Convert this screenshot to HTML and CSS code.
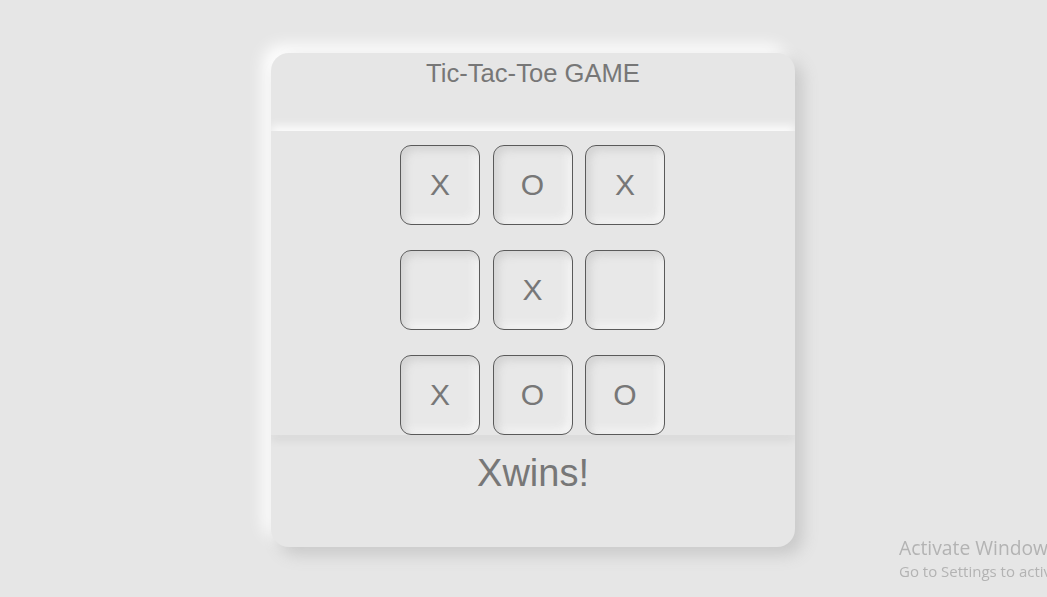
FILE: index.html
```html
<!DOCTYPE html>
<html>
<head>
<meta charset="utf-8">
<link rel="stylesheet" href="styles.css">
</head>
<body>
<div class="card">
  <div class="header"><h1 class="title">Tic-Tac-Toe GAME</h1></div>
  <div class="board">
    <div class="cell">X</div><div class="cell">O</div><div class="cell">X</div>
    <div class="cell"></div><div class="cell">X</div><div class="cell"></div>
    <div class="cell">X</div><div class="cell">O</div><div class="cell">O</div>
  </div>
  <div class="footer"><div class="status">Xwins!</div></div>
</div>
<div class="watermark">
  <div class="wm1">Activate Windows</div>
  <div class="wm2">Go to Settings to activate Windows.</div>
</div>
</body>
</html>
```
FILE: styles.css
```css
html, body {
  margin: 0;
  padding: 0;
  background: #e6e6e6;
  height: 100%;
  overflow: hidden;
  font-family: "Liberation Sans", Arial, sans-serif;
  color: #777;
}
.card {
  margin: 53px 0 0 271px;
  width: 524px;
  height: 494px;
  border-radius: 18px;
  background: #e6e6e6;
  box-shadow: 8px 8px 16px #c9c9c9, -8px -8px 16px #ffffff;
  overflow: hidden;
  display: flex;
  flex-direction: column;
}
.header {
  height: 78px;
  text-align: center;
}
.title {
  margin: 0;
  padding-top: 5px;
  font-size: 25.6px;
  font-weight: normal;
  line-height: 30px;
  color: #777;
}
.board {
  position: relative;
  z-index: 1;
  height: 304px;
  box-sizing: border-box;
  padding-top: 14px;
  padding-right: 1px;
  background: #e6e6e6;
  box-shadow: 0 -5px 9px rgba(255,255,255,0.9), 0 5px 9px rgba(0,0,0,0.07);
  display: grid;
  grid-template-columns: repeat(3, 80px);
  grid-auto-rows: 80px;
  column-gap: 12.5px;
  row-gap: 25px;
  justify-content: center;
}
.cell {
  box-sizing: border-box;
  border: 1px solid #5a5a5a;
  border-radius: 11px;
  background: #e8e8e8;
  box-shadow: inset 4px 4px 8px #d2d2d2, inset -4px -4px 8px #f7f7f7;
  display: flex;
  align-items: center;
  justify-content: center;
  font-size: 30px;
  color: #777;
}
.footer {
  flex: 1;
  text-align: center;
}
.status {
  padding-top: 16px;
  font-size: 38px;
  line-height: 44px;
  color: #777;
}
.watermark {
  position: fixed;
  left: 899px;
  top: 536px;
  white-space: nowrap;
  font-family: "Open Sans", "Noto Sans", sans-serif;
  color: #b3b3b3;
}
.wm1 {
  font-size: 19.3px;
  line-height: 24px;
}
.wm2 {
  font-size: 15px;
  line-height: 22px;
}
```
